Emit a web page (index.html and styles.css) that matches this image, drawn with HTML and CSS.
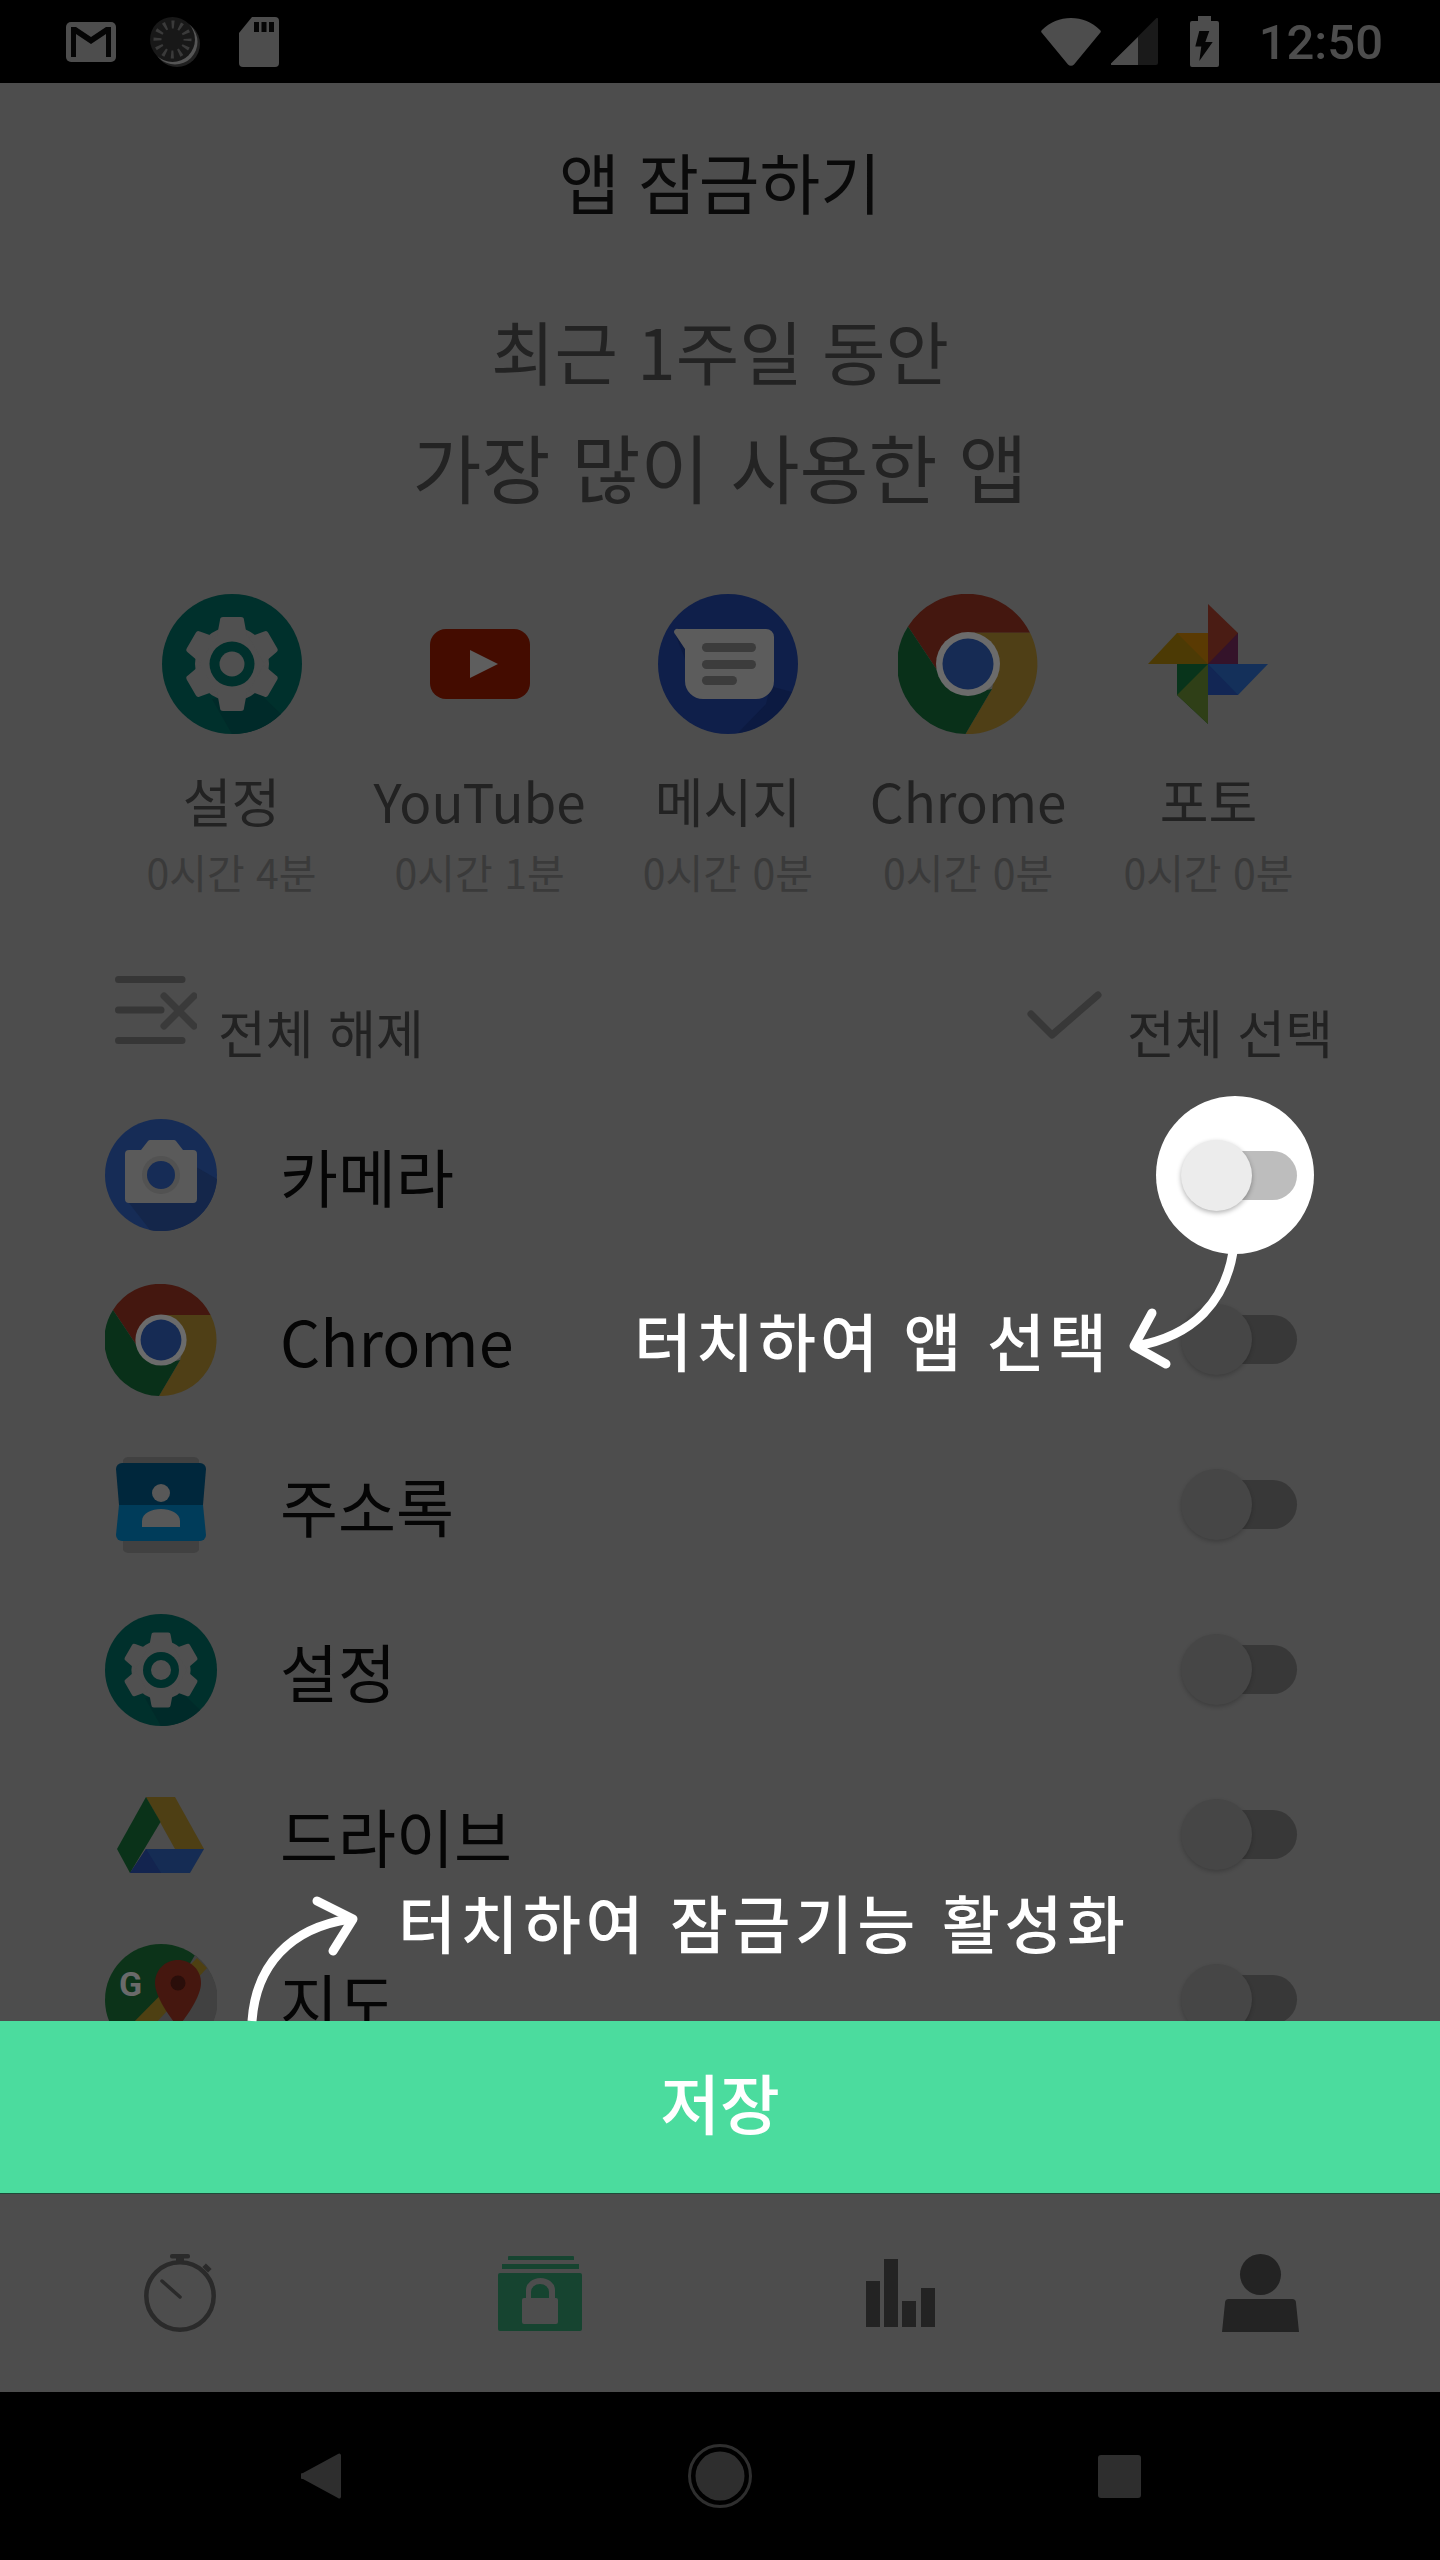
FILE: index.html
```html
<!DOCTYPE html>
<html lang="ko">
<head>
<meta charset="utf-8">
<title>앱 잠금하기</title>
<link rel="stylesheet" href="styles.css">
</head>
<body>
<svg class="defs" xmlns="http://www.w3.org/2000/svg">
  <symbol id="gear" viewBox="0 0 140 140">
    <circle cx="70" cy="70" r="70" fill="#00302c"/>
    <path d="M70 140A70 70 0 0 0 119 120L95 97 50 105Z" fill="#002a29"/>
    <g fill="#505050">
      <circle cx="70" cy="70" r="37"/>
      <path d="M58 26a3 3 0 0 1 3-3h18a3 3 0 0 1 3 3l3 16h-30z"/>
      <path d="M58 26a3 3 0 0 1 3-3h18a3 3 0 0 1 3 3l3 16h-30z" transform="rotate(60 70 70)"/>
      <path d="M58 26a3 3 0 0 1 3-3h18a3 3 0 0 1 3 3l3 16h-30z" transform="rotate(120 70 70)"/>
      <path d="M58 26a3 3 0 0 1 3-3h18a3 3 0 0 1 3 3l3 16h-30z" transform="rotate(180 70 70)"/>
      <path d="M58 26a3 3 0 0 1 3-3h18a3 3 0 0 1 3 3l3 16h-30z" transform="rotate(240 70 70)"/>
      <path d="M58 26a3 3 0 0 1 3-3h18a3 3 0 0 1 3 3l3 16h-30z" transform="rotate(300 70 70)"/>
    </g>
    <circle cx="70" cy="70" r="22.500" fill="#00302c"/>
    <circle cx="70" cy="70" r="12.500" fill="#505050"/>
  </symbol>
  <symbol id="chrome" viewBox="0 0 140 140">
    <path d="M10 32.500A70 70 0 0 1 132 38.750H70L39 76Z" fill="#44170f"/>
    <path d="M132 38.750A70 70 0 0 1 67.500 140L94 95 100 70 70 38.750Z" fill="#4f3f16"/>
    <path d="M10 32.500L39 76 70 100 94 95 67.500 140A70 70 0 0 1 10 32.500Z" fill="#093019"/>
    <circle cx="70" cy="70" r="32" fill="#6b6b6b"/>
    <circle cx="70" cy="70" r="25.500" fill="#162b54"/>
  </symbol>
</svg>

<div class="screen">
  <header class="status-bar">
    <div class="status-left">
      <svg class="st-mail" viewBox="0 0 50 40"><rect width="50" height="40" rx="5" fill="#4d4d4d"/><path d="M5 35V5H10L25 15 40 5H45V35H40V12L25 22 10 12V35Z" fill="#050505"/></svg>
      <svg class="st-disc" viewBox="0 0 50 50"><circle cx="27" cy="27" r="23" fill="#202020"/><circle cx="25" cy="25" r="22.500" fill="#555"/><circle cx="22.500" cy="22.500" r="22.500" fill="#181818"/><circle cx="22.500" cy="22.500" r="15" fill="none" stroke="#3a3a3a" stroke-width="8" stroke-dasharray="2.700 5.150" stroke-dashoffset="1.350"/></svg>
      <svg class="st-sd" viewBox="0 0 40 50"><path d="M13 0h23a4 4 0 0 1 4 4v42a4 4 0 0 1-4 4H4a4 4 0 0 1-4-4V16z" fill="#4d4d4d"/><path d="M15 5h5v10h-5zM22.500 5h5v10h-5zM30 5h5v10h-5z" fill="#050505"/></svg>
    </div>
    <div class="status-right">
      <svg class="st-wifi" viewBox="0 0 60 48"><path d="M27 46.500L1 15a2 2 0 0 1 0-3C9 4 19 0 30 0s21 4 29 12a2 2 0 0 1 0 3L33 46.500a4 4 0 0 1-6 0Z" fill="#4d4d4d"/></svg>
      <svg class="st-signal" viewBox="0 0 47 47"><path d="M47 1.500a1 1 0 0 0-2-1L.5 45a1 1 0 0 0 1 2H45a2 2 0 0 0 2-2z" fill="#1a1a1a"/><path d="M27 19L.5 45a1 1 0 0 0 1 2H27z" fill="#4d4d4d"/></svg>
      <svg class="st-batt" viewBox="0 0 29 51"><path d="M8 0h13v5h6a2 2 0 0 1 2 2v42a2 2 0 0 1-2 2H2a2 2 0 0 1-2-2V7a2 2 0 0 1 2-2h6z" fill="#4d4d4d"/><path d="M9.300 15H19.300L15.300 26H22.700L9.300 45 11.300 30.500H5.300Z" fill="#050505"/></svg>
      <span class="st-time">12:50</span>
    </div>
  </header>

  <main class="content">
    <h1 class="title">앱 잠금하기</h1>
    <div class="headline">
      <p class="headline-first">최근 1주일 동안</p>
      <p class="headline-second">가장 많이 사용한 앱</p>
    </div>

    <section class="top-apps">
      <div class="top-app">
        <svg class="top-icon"><use href="#gear"/></svg>
        <div class="top-name">설정</div>
        <div class="top-time">0시간 4분</div>
      </div>
      <div class="top-app">
        <svg class="top-icon" viewBox="0 0 140 140"><rect x="20" y="35" width="100" height="70" rx="16" fill="#440c00"/><path d="M60 56l28 14-28 14z" fill="#5e5e5e"/></svg>
        <div class="top-name">YouTube</div>
        <div class="top-time">0시간 1분</div>
      </div>
      <div class="top-app">
        <svg class="top-icon" viewBox="0 0 140 140"><circle cx="70" cy="70" r="70" fill="#0f1f4a"/><path d="M29 70L18 42 113 90 108 110 80 139A70 70 0 0 0 134 98Z" fill="#0a1638" opacity=".5"/><path d="M20 35H108a8 8 0 0 1 8 8V87a18 18 0 0 1-18 18H45a18 18 0 0 1-18-18V55L17 40a3 3 0 0 1 3-5Z" fill="#5c5c5c"/><g fill="#3c3c3c"><rect x="44" y="49" width="54" height="9" rx="4.500"/><rect x="44" y="66" width="54" height="9" rx="4.500"/><rect x="44" y="82" width="35" height="9" rx="4.500"/></g></svg>
        <div class="top-name">메시지</div>
        <div class="top-time">0시간 0분</div>
      </div>
      <div class="top-app">
        <svg class="top-icon"><use href="#chrome"/></svg>
        <div class="top-name">Chrome</div>
        <div class="top-time">0시간 0분</div>
      </div>
      <div class="top-app">
        <svg class="top-icon" viewBox="-10 -10 140 140">
          <path d="M60 0L90 29V60H60Z" fill="#4a1c14"/><path d="M90 29V60H60Z" fill="#34132a"/>
          <path d="M0 60L29 29H60V60Z" fill="#4c3a05"/><path d="M29 29H60V60Z" fill="#5a3a03"/>
          <path d="M29 60H60V120L29 91Z" fill="#08341b"/><path d="M29 91L60 60V120Z" fill="#2f3f17"/>
          <path d="M60 60H120L90 91H60Z" fill="#14305a"/><path d="M60 60L90 91H60Z" fill="#122654"/>
        </svg>
        <div class="top-name">포토</div>
        <div class="top-time">0시간 0분</div>
      </div>
    </section>

    <section class="select-row">
      <div class="select-group">
        <svg class="clear-icon" viewBox="0 0 82 68"><g stroke="#363636" stroke-width="7" stroke-linecap="round" fill="none"><path d="M3.500 3.500H67M3.500 34H46M3.500 64.500H67"/><path d="M49 20L79 50M79 20L49 50" stroke="#3a3a3a"/></g></svg>
        <span class="select-text">전체 해제</span>
      </div>
      <div class="select-group">
        <svg class="check-icon" viewBox="0 0 75 48"><path d="M4 23L25 44 71 4" fill="none" stroke="#383838" stroke-width="7" stroke-linecap="round" stroke-linejoin="round"/></svg>
        <span class="select-text">전체 선택</span>
      </div>
    </section>

    <section class="app-list">
      <div class="app-row">
        <svg class="row-icon" viewBox="0 0 112 112"><circle cx="56" cy="56" r="56" fill="#162c56"/><path d="M60 30L112 60A56 56 0 0 1 45 111L24 84Z" fill="#14264a"/><path d="M24 31H36L43 22a3 3 0 0 1 2-1H69a3 3 0 0 1 2 1L78 31H88a4 4 0 0 1 4 4V80a4 4 0 0 1-4 4H24a4 4 0 0 1-4-4V35a4 4 0 0 1 4-4Z" fill="#5a5a5a"/><circle cx="56" cy="56" r="19" fill="#525252"/><circle cx="56" cy="56" r="14" fill="#162c56"/></svg>
        <span class="row-name">카메라</span>
        <div class="toggle"><div class="track"></div><div class="thumb"></div></div>
      </div>
      <div class="app-row">
        <svg class="row-icon"><use href="#chrome"/></svg>
        <span class="row-name">Chrome</span>
        <div class="toggle"><div class="track"></div><div class="thumb"></div></div>
      </div>
      <div class="app-row">
        <svg class="row-icon" viewBox="0 0 112 112"><path d="M18 11a6 6 0 0 1 5-3H89a6 6 0 0 1 5 3v90a6 6 0 0 1-5 3H23a6 6 0 0 1-5-3z" fill="#414141"/><path d="M11 20a6 6 0 0 1 6-6H95a6 6 0 0 1 6 6L98 56H14Z" fill="#00273c"/><path d="M14 56H98L101 86a6 6 0 0 1-6 6H17a6 6 0 0 1-6-6Z" fill="#003c5a"/><circle cx="56" cy="44" r="9" fill="#585858"/><path d="M37 78V72C37 64 47 60 56 60s19 4 19 12v6Z" fill="#585858"/></svg>
        <span class="row-name">주소록</span>
        <div class="toggle"><div class="track"></div><div class="thumb"></div></div>
      </div>
      <div class="app-row">
        <svg class="row-icon"><use href="#gear"/></svg>
        <span class="row-name">설정</span>
        <div class="toggle"><div class="track"></div><div class="thumb"></div></div>
      </div>
      <div class="app-row">
        <svg class="row-icon" viewBox="0 0 112 112"><g transform="translate(12 18)"><path d="M29 0H58L87 52H58Z" fill="#4e3f14"/><path d="M29 0L43.500 25 13 76 0 52Z" fill="#0a3219"/><path d="M29 52H87L73 76H13Z" fill="#152c54"/><path d="M29 52L13 76 44 76Z" fill="#13244f"/></g></svg>
        <span class="row-name">드라이브</span>
        <div class="toggle"><div class="track"></div><div class="thumb"></div></div>
      </div>
      <div class="app-row">
        <svg class="row-icon" viewBox="0 0 112 112"><circle cx="56" cy="56" r="56" fill="#0c3319"/><path d="M90 11A56 56 0 0 1 56 112H30Z" fill="#414141"/><path d="M92 14L102 24 36 95 22 85Z" fill="#4e4012"/><path d="M50 112L62 90 72 112Z" fill="#152c54"/><path d="M73 16c13 0 23 10 23 23 0 17-23 44-23 44S50 56 50 39c0-13 10-23 23-23z" fill="#45170f"/><circle cx="73" cy="39" r="7.500" fill="#2a0e0a"/><text x="14" y="52" class="maps-g">G</text></svg>
        <span class="row-name">지도</span>
        <div class="toggle"><div class="track"></div><div class="thumb"></div></div>
      </div>
    </section>

    <button class="save">저장</button>

    <nav class="tabs">
      <div class="tab">
        <svg class="tab-stopwatch" viewBox="0 0 72 78"><circle cx="36" cy="42" r="33.700" fill="none" stroke="#2a2a2a" stroke-width="4.500"/><rect x="26" y="0" width="20" height="4.500" rx="2" fill="#2a2a2a"/><rect x="32" y="3" width="8" height="7" fill="#2a2a2a"/><rect x="59" y="11.500" width="8" height="5" transform="rotate(45 63 14)" fill="#2a2a2a"/><path d="M18 27L36 43" stroke="#2a2a2a" stroke-width="3.500" stroke-linecap="round"/></svg>
      </div>
      <div class="tab">
        <svg class="tab-lock" viewBox="0 0 84 76"><path d="M11 1h64a1 1 0 0 1 1 1v3H10V2a1 1 0 0 1 1-1zM4 9h77v5H4z" fill="#164430"/><rect y="18" width="84" height="58" rx="2" fill="#164430"/><path d="M28 44V35a14.500 12 0 0 1 29 0V44H51V37a9 8 0 0 0-18 0V44Z" fill="#4d4d4d"/><rect x="24" y="43" width="36" height="26" rx="2" fill="#4d4d4d"/></svg>
      </div>
      <div class="tab">
        <svg class="tab-bars" viewBox="0 0 69 68"><path d="M0 22h14v46H0zM18 0h14v68H18zM36 42h14v26H36zM55 29h14v39H55z" fill="#232323"/></svg>
      </div>
      <div class="tab">
        <svg class="tab-person" viewBox="0 0 77 78"><circle cx="38.500" cy="20.500" r="20.500" fill="#232323"/><path d="M7 45H70a4 4 0 0 1 4 4L77 78H0L3 49a4 4 0 0 1 4-4Z" fill="#232323"/></svg>
      </div>
    </nav>
  </main>

  <footer class="nav-bar">
    <svg class="nav-back" viewBox="0 0 40 46"><path d="M40 2a2 2 0 0 0-3-1L2 20a3 3 0 0 0 0 6L37 45a2 2 0 0 0 3-1z" fill="#2e2e2e"/></svg>
    <svg class="nav-home" viewBox="0 0 64 64"><circle cx="32" cy="32" r="30.500" fill="none" stroke="#2e2e2e" stroke-width="3"/><circle cx="32" cy="32" r="24.500" fill="#2e2e2e"/></svg>
    <svg class="nav-recent" viewBox="0 0 43 43"><rect width="43" height="43" rx="3" fill="#2e2e2e"/></svg>
  </footer>

  <div class="spotlight"><div class="toggle lit"><div class="track"></div><div class="thumb"></div></div></div>

  <svg class="arrows" viewBox="0 0 1440 2560">
    <g fill="none" stroke="#fff" stroke-width="9" stroke-linecap="round" stroke-linejoin="round">
      <path d="M1233 1252C1225 1300 1195 1336 1136 1346" stroke-linecap="butt"/>
      <path d="M1152 1313L1134 1346 1166 1364"/>
      <path d="M252 2021C256 1965 290 1928 350 1919" stroke-linecap="butt"/>
      <path d="M317 1901L353 1919 333 1951"/>
    </g>
  </svg>
  <div class="hint hint-select">터치하여 앱 선택</div>
  <div class="hint hint-lock">터치하여 잠금기능 활성화</div>
</div>
</body>
</html>
```

FILE: styles.css
```css
html, body { margin: 0; padding: 0; background: #4d4d4d; }
body { font-family: "Noto Sans CJK KR", "Noto Sans", sans-serif; }
.defs { display: none; }
.screen { position: relative; width: 1440px; height: 2560px; overflow: hidden; display: flex; flex-direction: column; background: #4d4d4d; }

.status-bar { height: 83px; flex: none; background: #000; display: flex; justify-content: space-between; align-items: center; padding: 0 57px 0 66px; box-sizing: border-box; }
.status-left, .status-right { display: flex; align-items: center; }
.st-mail { width: 50px; height: 40px; }
.st-disc { width: 50px; height: 50px; margin-left: 34px; }
.st-sd { width: 40px; height: 50px; margin-left: 39px; }
.st-wifi { width: 60px; height: 48px; }
.st-signal { width: 47px; height: 47px; margin-left: 10px; }
.st-batt { width: 29px; height: 51px; margin-left: 32px; }
.st-time { font-family: Roboto, sans-serif; font-size: 49px; font-weight: 500; line-height: 51px; color: #4d4d4d; margin-left: 40px; padding-top: 2px; }

.content { flex: 1; display: flex; flex-direction: column; min-height: 0; }
.title { margin: 0; height: 200px; padding-bottom: 6px; box-sizing: border-box; line-height: 194px; text-align: center; font-size: 66px; font-weight: 400; color: #0a0a0a; }
.headline { margin-top: 9px; text-align: center; font-weight: 400; color: #232323; }
.headline p { margin: 0; line-height: 116px; }
.headline-first { font-size: 69px; }
.headline-second { font-size: 75px; }

.top-apps { display: flex; justify-content: center; gap: 57px; margin-top: 70px; }
.top-app { display: flex; flex-direction: column; align-items: center; }
.top-icon { width: 140px; height: 140px; display: block; margin-bottom: 26px; }
.top-name { font-size: 53px; line-height: 80px; color: #222; white-space: nowrap; }
.top-time { font-size: 41px; line-height: 62px; color: #3a3a3a; white-space: nowrap; }

.select-row { display: flex; justify-content: space-between; padding: 17px 107px 0 115px; height: 132px; box-sizing: border-box; flex: none; margin-top: 58px; }
.select-group { display: flex; align-items: flex-start; transform: translateY(-1px); }
.clear-icon { width: 82px; height: 68px; }
.check-icon { width: 75px; height: 48px; margin-top: 15px; margin-right: 25px; }
.select-text { font-size: 52px; line-height: 64px; margin-top: 24px; margin-left: 21px; color: #222; }
.check-icon + .select-text { margin-left: 0; }

.app-list { height: 929px; overflow: hidden; flex: none; }
.app-row { display: flex; align-items: center; height: 165px; padding: 0 143px 0 105px; box-sizing: border-box; }
.row-icon { width: 112px; height: 112px; flex: none; }
.row-name { flex: 1; margin-left: 63px; font-size: 63px; line-height: 80px; color: #050505; }
.maps-g { font-family: Roboto, sans-serif; font-weight: 700; font-size: 34px; fill: #6a6a6a; }

.toggle { position: relative; width: 116px; height: 71px; flex: none; display: flex; align-items: center; justify-content: flex-end; }
.track { width: 100px; height: 49px; border-radius: 25px; background: #383838; }
.thumb { position: absolute; left: 0; top: 0; width: 71px; height: 71px; border-radius: 50%; background: #464646; box-shadow: 0 2px 4px rgba(0, 0, 0, .2); }
.lit .track { background: #bdbdbd; }
.lit .thumb { background: #ececec; box-shadow: 0 2px 5px rgba(0, 0, 0, .3); }

.save { flex: none; height: 173px; border: 0; border-bottom: 1px solid #1d4a38; padding: 0 0 12px; background: #4bdc9e; color: #fff; font-family: inherit; font-size: 65px; font-weight: 500; }
.tabs { flex: 1; display: grid; grid-template-columns: repeat(4, 1fr); align-items: center; justify-items: center; }
.tab { display: flex; }
.tab-stopwatch { width: 72px; height: 78px; }
.tab-lock { width: 84px; height: 76px; }
.tab-bars { width: 69px; height: 68px; }
.tab-person { width: 77px; height: 78px; }

.nav-bar { height: 168px; flex: none; background: #000; display: flex; align-items: center; padding-left: 301px; box-sizing: border-box; }
.nav-back { width: 40px; height: 46px; }
.nav-home { width: 64px; height: 64px; margin-left: 347px; }
.nav-recent { width: 43px; height: 43px; margin-left: 346px; }

.spotlight { position: absolute; left: 1156px; top: 1096px; width: 158px; height: 158px; border-radius: 50%; background: #fff; display: flex; align-items: center; padding-left: 25px; box-sizing: border-box; }
.arrows { position: absolute; left: 0; top: 0; width: 1440px; height: 2560px; pointer-events: none; }
.hint { position: absolute; color: #fff; font-size: 63px; font-weight: 500; line-height: 80px; white-space: nowrap; }
.hint-select { left: 634px; top: 1299px; letter-spacing: 4px; }
.hint-lock { left: 398px; top: 1881px; letter-spacing: 4.500px; }
```
